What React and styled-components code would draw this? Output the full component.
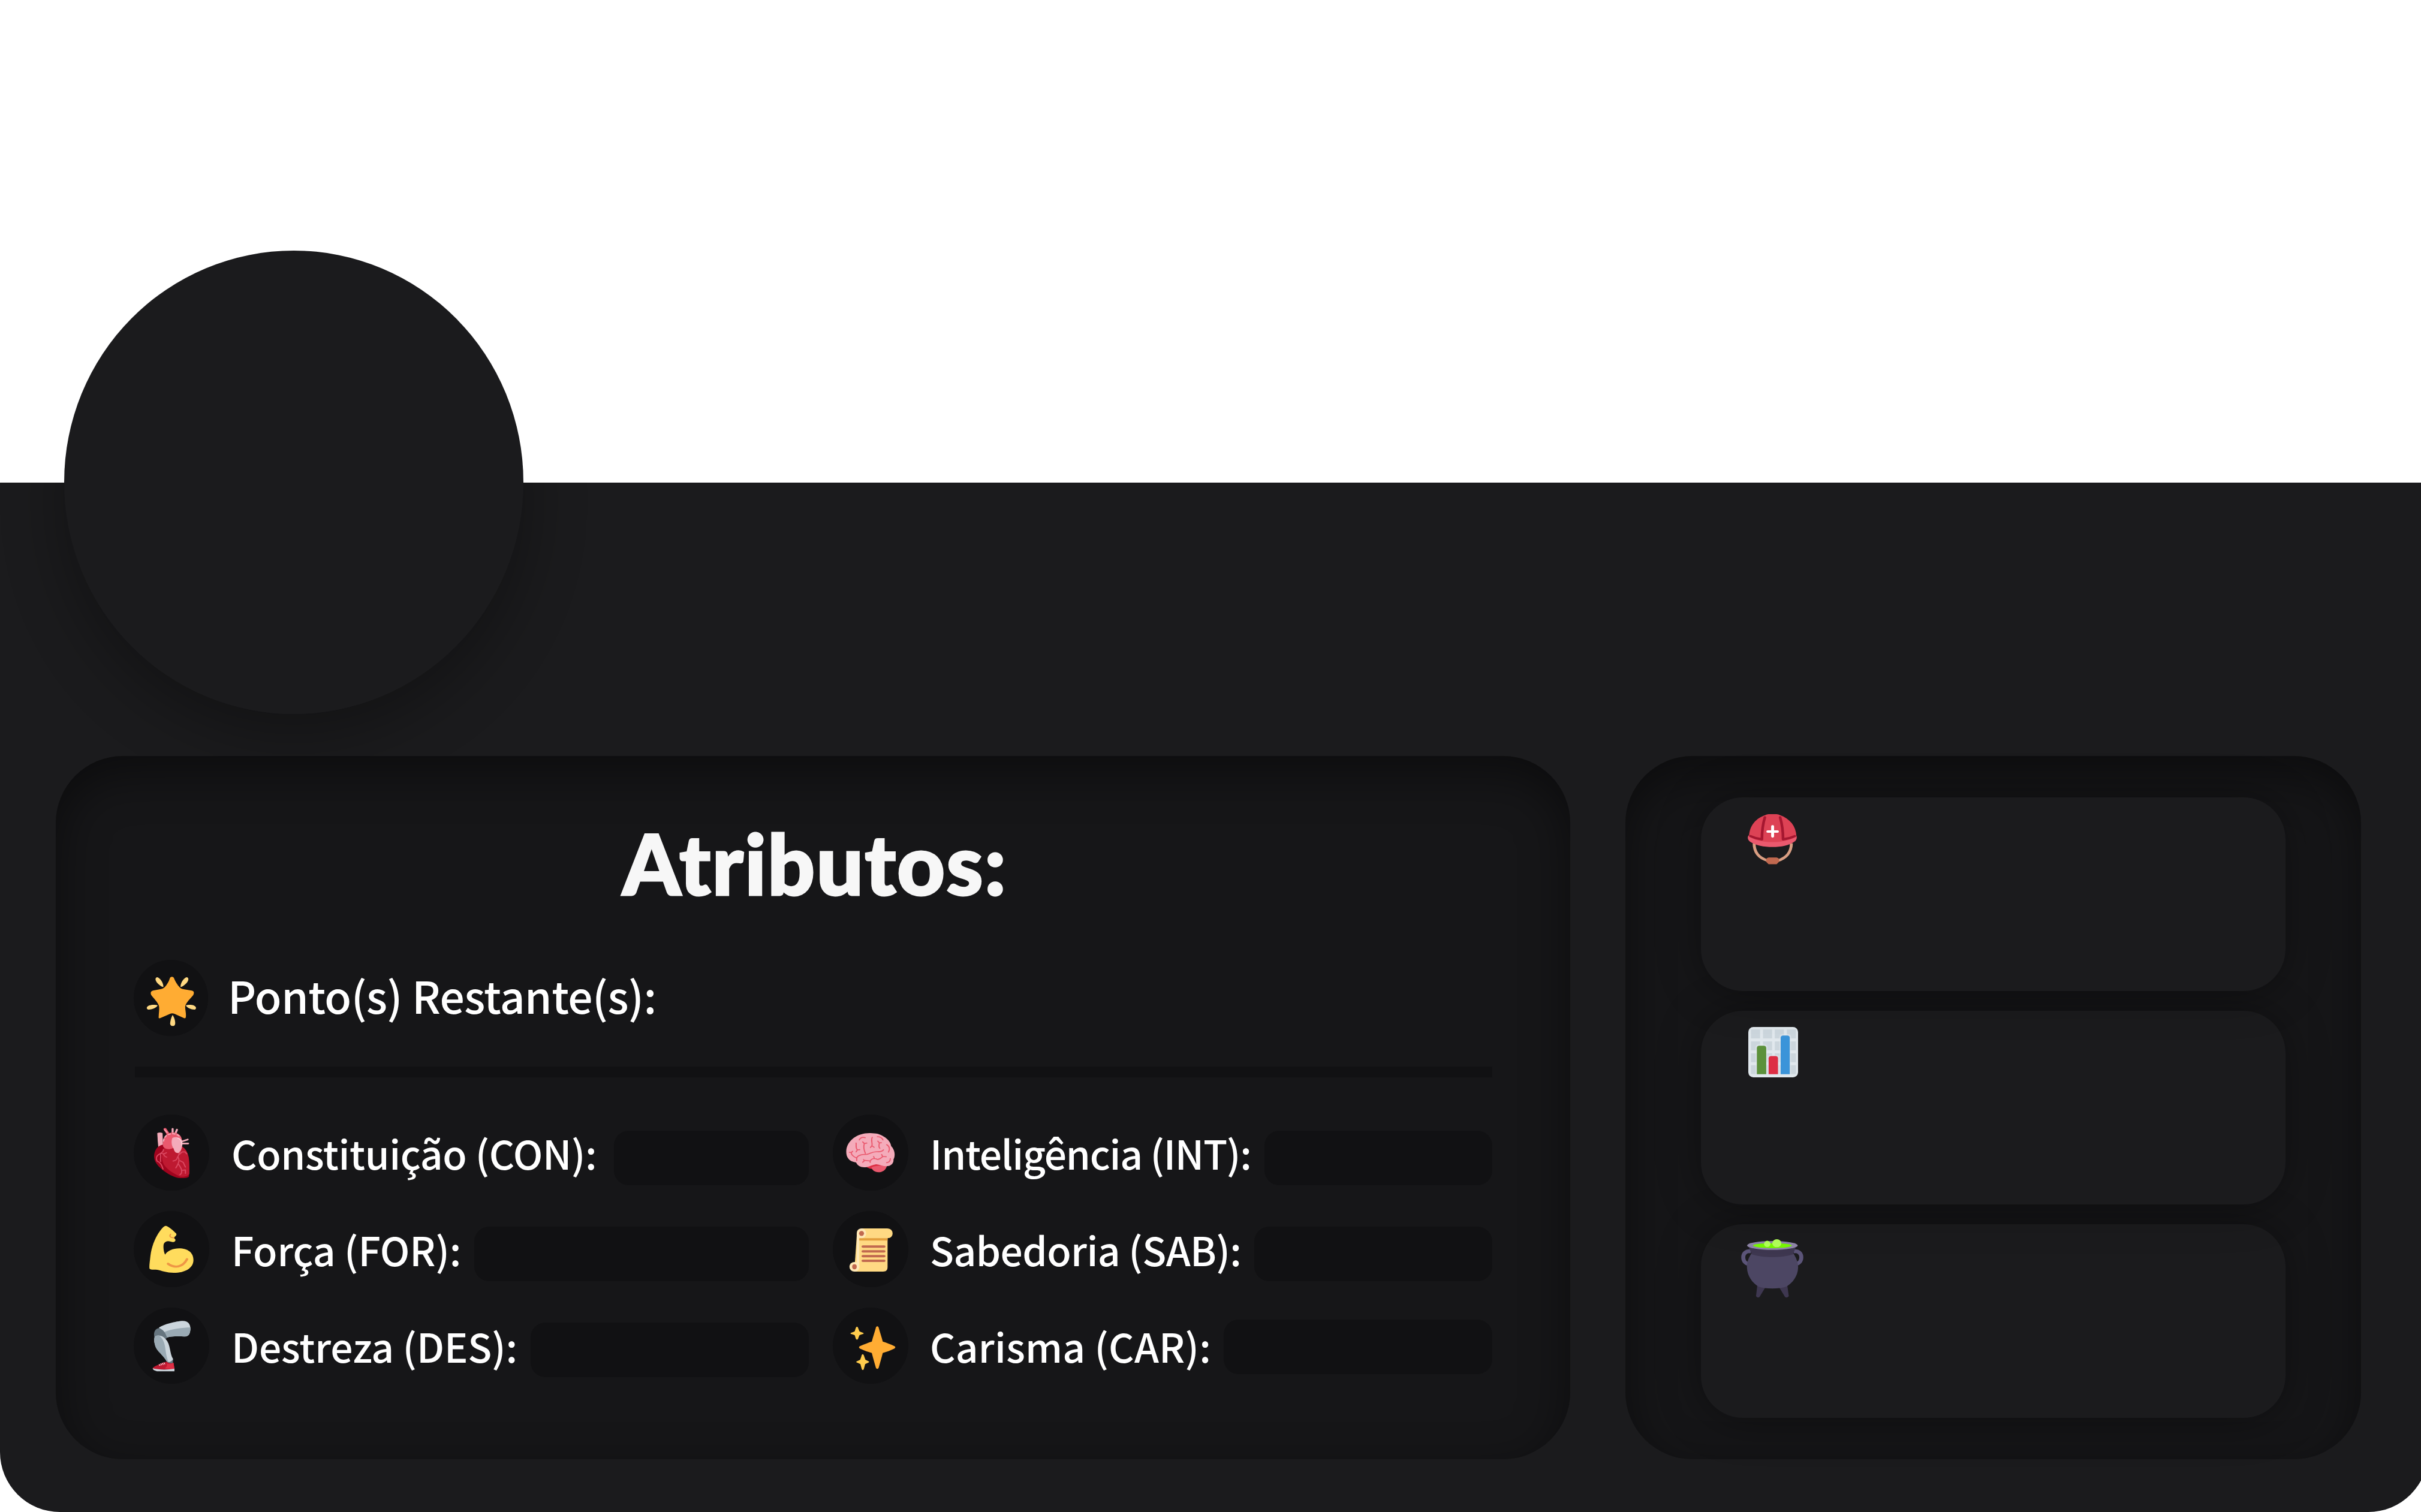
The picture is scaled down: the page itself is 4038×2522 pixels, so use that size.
import React from "react";
import styled, { createGlobalStyle } from "styled-components";

const GlobalStyle = createGlobalStyle`
  * { box-sizing: border-box; }
  body {
    margin: 0;
    background: #ffffff;
    font-family: "Noto Sans CJK JP", "Noto Sans", sans-serif;
    overflow: hidden;
  }
`;

/* ---------- page ---------- */

const Page = styled.main`
  position: relative;
  display: flex;
  flex-direction: column;
  width: 4038px;
  height: 2522px;
  overflow: hidden;
`;

const Banner = styled.header`
  flex: 0 0 805px;
  background: #ffffff;
`;

const Sheet = styled.section`
  position: relative;
  display: flex;
  align-items: flex-start;
  gap: 92px;
  width: 4050px;
  height: 1717px;
  padding: 456px 0 0 93px;
  overflow: hidden;
  background: #1b1b1d;
  border-radius: 0 0 100px 100px;
`;

const AvatarShadow = styled.div`
  position: absolute;
  top: -387px;
  left: 107px;
  width: 766px;
  height: 773px;
  border-radius: 50%;
  box-shadow: 0 32px 105px rgba(0, 0, 0, 0.32);
`;

const Avatar = styled.div`
  position: absolute;
  top: 418px;
  left: 107px;
  width: 766px;
  height: 773px;
  border-radius: 50%;
  background: #1b1b1d;
`;

const Panel = styled.section`
  position: relative;
  display: flex;
  flex-direction: column;
  width: ${(p) => p.$width}px;
  height: 1173px;
  padding: ${(p) => p.$padding};
  border-radius: 112px;
  background: #161618;
  box-shadow: inset 0 26px 80px rgba(0, 0, 0, 0.45);
`;

/* ---------- attributes ---------- */

const Title = styled.h1`
  margin: 0 0 85px;
  padding-left: 6px;
  font-family: Lato, "Noto Sans", sans-serif;
  font-size: 139px;
  font-weight: 900;
  line-height: 153px;
  letter-spacing: 2px;
  text-align: center;
  color: #f7f7f7;
  -webkit-text-stroke: 3px #f7f7f7;
`;

const PointsRow = styled.div`
  display: flex;
  align-items: flex-start;
  gap: 33px;
  height: 127px;
`;

const PointsLabel = styled.span`
  font-size: 73px;
  font-weight: 500;
  line-height: 116px;
  letter-spacing: -0.55px;
  white-space: nowrap;
  color: #ffffff;
`;

const Divider = styled.hr`
  width: calc(100% - 2px);
  height: 18px;
  margin: 51px 0 62px 2px;
  border: 0;
  background: #111113;
`;

const Columns = styled.div`
  display: grid;
  grid-template-columns: 1126px 1100px;
  column-gap: 40px;
`;

const Column = styled.div`
  display: flex;
  flex-direction: column;
  gap: 34px;
`;

const Attribute = styled.div`
  display: flex;
  align-items: flex-start;
  height: 127px;
`;

const IconDisc = styled.span`
  flex: 0 0 ${(p) => p.$width || 126}px;
  height: 127px;
  border-radius: 50%;
  background: #111113;

  svg {
    display: block;
    width: 100%;
    height: 100%;
  }
`;

const AttributeLabel = styled.span`
  flex: 0 0 ${(p) => p.$width}px;
  margin-left: ${(p) => p.$indent}px;
  font-size: 65.9px;
  font-weight: 500;
  line-height: 128px;
  letter-spacing: ${(p) => p.$tracking}px;
  white-space: nowrap;
  color: #ffffff;
`;

const AttributeValue = styled.span`
  flex: 1;
  height: 91px;
  margin-top: ${(p) => p.$top}px;
  border-radius: 25px;
  background: #111113;
`;

/* ---------- side cards ---------- */

const SideCard = styled.article`
  flex: 0 0 323px;
  width: 975px;
  margin-bottom: 33px;
  padding: ${(p) => p.$padding};
  border-radius: 70px;
  background: #1b1b1d;
  box-shadow: 0 4px 70px rgba(0, 0, 0, 0.36);
  z-index: ${(p) => p.$level};
`;

const CardIcon = styled.svg`
  display: block;
  width: ${(p) => p.$w}px;
  height: ${(p) => p.$h}px;
`;

/* ---------- icons ---------- */

const GlowingStar = () => (
  <svg viewBox="38 62 208 381" preserveAspectRatio="none">
    <g fill="#ffd983">
      <path d="M104 149C112 152 122 180 121 198C114 196 100 176 99 160C99 153 101 149 104 149Z" />
      <path d="M186 149C178 152 168 180 169 198C176 196 190 176 191 160C191 153 189 149 186 149Z" />
      <path d="M75 300C77 286 98 284 105 290C102 302 88 312 79 311C75 309 74 305 75 300Z" />
      <path d="M212 300C210 286 192 284 184 290C187 302 200 312 209 311C212 309 213 305 212 300Z" />
      <path d="M147 338C151 348 155 370 154 382C153 392 150 393 147 393C143 393 141 390 140 382C140 370 143 348 147 338Z" />
    </g>
    <path
      fill="#ffac33"
      d="M145 147C148 147 150 150 151 155C155 172 160 188 167 200C170 206 174 208 180 210L200 216C207 219 208 226 204 240C196 258 184 276 182 296C182 314 185 330 184 345C184 356 181 356 177 352L153 333C148 329 143 329 139 333L114 352C109 357 107 354 108 345C108 330 110 314 109 296C107 276 94 256 87 238C84 226 86 219 92 216L110 210C116 208 120 206 124 200C131 188 136 172 139 155C140 150 142 147 145 147Z"
    />
  </svg>
);

const AnatomicalHeart = () => (
  <svg viewBox="60 57 330 381" preserveAspectRatio="none">
    <g stroke="#f4abba" strokeLinecap="round" fill="none">
      <path d="M197 131L208 150" stroke="#ea596e" strokeWidth="13" />
      <path d="M230 129V150M249 133L242 152" strokeWidth="9" />
      <path d="M195 133L206 147" strokeWidth="5" />
    </g>
    <path fill="#f4abba" d="M163 150Q175 144 186 150L188 212L168 226L165 190Z" />
    <path fill="#a0041e" d="M188 208C165 212 150 236 149 265C149 290 162 312 184 332C208 354 238 374 264 375C285 376 299 374 301 367C304 340 303 300 301 276C297 245 284 222 262 212Z" />
    <path fill="#be1931" d="M192 226C182 248 180 284 192 308C210 338 242 356 264 368C280 370 302 365 303 352C303 322 303 292 300 272C296 244 284 222 262 212Z" />
    <path fill="#ea596e" d="M188 214C184 172 202 147 230 147C256 147 272 166 271 192L233 224C212 236 192 230 188 214Z" />
    <path d="M190 192C192 166 208 153 230 153C246 154 258 162 264 172" fill="none" stroke="#f4abba" strokeWidth="6" strokeDasharray="15 5" />
    <g stroke="#f4abba" strokeLinecap="round" fill="none" strokeWidth="8">
      <path d="M264 194L296 182M268 202H298" />
    </g>
    <path fill="#f4abba" d="M229 174C246 166 264 172 272 188C276 210 268 240 258 249C246 253 237 244 235 229C225 214 223 190 229 174Z" />
    <path d="M252 176C262 178 270 188 270 208" fill="none" stroke="#ffd5dc" strokeWidth="4" strokeLinecap="round" />
    <g stroke="#dc4a63" strokeWidth="5" strokeLinecap="round" strokeLinejoin="round" fill="none">
      <path d="M190 232C192 244 178 250 168 258C158 266 158 280 162 290C178 296 184 312 188 330" />
      <path d="M178 252L192 254L203 248M190 254C192 262 196 268 204 270M176 255C182 268 174 276 178 292" />
      <path d="M262 244C256 254 258 264 250 274C250 284 240 288 232 290M252 268C262 280 258 300 244 324" />
      <path d="M260 256L272 244L284 244L292 254M262 288L276 296L286 320M256 306C264 320 274 334 268 352L262 358M274 336L286 334V352" />
    </g>
  </svg>
);

const FlexedArm = () => (
  <svg viewBox="60 540 330 381" preserveAspectRatio="none">
    <path
      fill="#ffdc5d"
      d="M203 615C215 620 235 640 245 652C249 658 246 662 240 668L234 674C240 678 244 682 242 688C240 696 232 697 222 693C208 688 196 692 191 706C188 725 192 745 197 758C208 738 232 727 258 727C296 727 321 748 321 785C321 825 285 849 235 849C205 849 180 838 163 834C150 832 135 836 129 828C127 815 131 790 133 765C140 700 165 650 188 622C194 615 198 613 203 615Z"
    />
    <path d="M210 804C240 828 274 822 293 781" fill="none" stroke="#ef9645" strokeWidth="11" strokeLinecap="round" />
    <path d="M221 656C213 668 222 673 236 674" fill="none" stroke="#ef9645" strokeWidth="5" strokeLinecap="round" />
  </svg>
);

const MechanicalLeg = () => (
  <svg viewBox="60 1022 330 381" preserveAspectRatio="none">
    <path fill="#ccd6dd" d="M170 1123C190 1106 245 1090 275 1089C298 1090 308 1105 308 1130C306 1150 303 1165 285 1167C262 1166 225 1164 208 1171L186 1150Z" />
    <path fill="#9aaab4" d="M192 1145C230 1128 275 1122 308 1122C308 1152 300 1166 283 1167C258 1165 225 1165 204 1172Z" />
    <path fill="#66757f" d="M170 1125C188 1130 200 1150 206 1174L196 1180C185 1164 165 1160 151 1172C146 1150 150 1130 170 1125Z" />
    <path fill="#ccd6dd" d="M152 1168C165 1156 186 1162 200 1180C222 1206 216 1250 232 1279L228 1300L208 1298C195 1268 160 1235 152 1205C148 1188 149 1176 152 1168Z" />
    <path fill="#9aaab4" d="M152 1168C158 1160 168 1160 175 1165C206 1200 192 1240 213 1297L206 1294C185 1252 156 1240 152 1205C149 1188 149 1176 152 1168Z" />
    <path fill="#66757f" d="M204 1291Q218 1302 232 1281L231 1300Q215 1308 205 1300Z" />
    <path fill="#be1931" d="M184 1299L205 1293C212 1302 225 1303 234 1297L238 1330L170 1334L143 1328C143 1318 165 1311 184 1299Z" />
    <path fill="#dd2e44" d="M204 1302C214 1308 226 1304 234 1299L238 1328C222 1330 206 1330 196 1326C204 1320 208 1312 204 1302Z" />
    <path fill="#ccd6dd" d="M143 1326C170 1334 206 1334 238 1328V1341H162C150 1338 143 1333 143 1326Z" />
    <path d="M171 1307L175 1312M178 1303L182 1309M185 1300L189 1307M192 1298L196 1305" stroke="#ffffff" strokeWidth="3" strokeLinecap="round" />
  </svg>
);

const Brain = () => (
  <svg viewBox="50 57 331 381" preserveAspectRatio="none">
    <path fill="#dd2e44" d="M194 318C210 304 250 300 286 312L240 332L212 328Z" />
    <path fill="#ea596e" d="M219 322C240 310 265 312 287 315C282 335 268 346 250 346C232 345 224 336 219 322Z" />
    <path
      fill="#f4abba"
      d="M215 150C160 148 112 185 109 240C108 270 120 292 152 297C160 315 175 324 198 320C212 318 224 308 240 306C256 308 270 316 285 316C305 316 318 300 316 282C326 262 321 232 306 215C303 195 290 178 274 168C258 154 240 151 215 150Z"
    />
    <g fill="none" stroke="#ea596e" strokeWidth="5" strokeLinecap="round" strokeLinejoin="round">
      <path d="M166 184C172 170 182 170 192 173" />
      <path d="M223 171C216 185 224 198 222 212L215 222M222 214L231 221" />
      <path d="M245 168C258 168 266 174 270 184" />
      <path d="M152 200C154 215 148 222 158 234L152 244M158 234L168 233" />
      <path d="M181 194L188 202L199 200M188 204C182 222 188 238 193 252" />
      <path d="M247 190L254 199L263 198M254 201C252 212 250 218 256 226" />
      <path d="M286 208C298 215 302 230 294 245" />
      <path d="M123 246L131 247L137 241M131 249C132 262 145 270 155 275C158 262 175 256 200 256C215 252 225 242 245 243C260 244 268 240 272 234M155 276V288" />
      <path d="M181 296L190 287C200 286 206 290 214 289C222 276 230 276 240 279C252 288 262 272 270 267L284 268M188 288L185 282M214 290V297M232 276L229 267M268 266L264 257" />
      <path d="M286 298C296 296 302 288 302 278" />
    </g>
  </svg>
);

const Scroll = () => (
  <svg viewBox="50 540 331 381" preserveAspectRatio="none">
    <path fill="#ffd983" d="M156 650H290V820C290 836 284 843 270 843H144Z" />
    <path fill="#ffe8b6" d="M155 652H166V819C166 834 158 843 145 843V796L155 798Z" />
    <path fill="#e39f3d" d="M166 674H290V688H166Z" />
    <path fill="#ffd983" d="M176 627H288C304 627 312 638 312 652C312 666 304 676 290 676H176Z" />
    <path fill="#ffe8b6" d="M155 652C155 638 162 627 176 627C188 627 196 638 196 652C196 666 188 676 176 676H166L155 690Z" />
    <ellipse cx="176" cy="652" rx="11" ry="12.500" fill="#c1694f" />
    <ellipse cx="145" cy="819" rx="22" ry="24" fill="#ffe8b6" />
    <ellipse cx="145" cy="819" rx="10" ry="12.500" fill="#c1694f" />
    <path d="M182 718H275M182 742H275M182 766H275M182 789H275" stroke="#c1694f" strokeWidth="12" strokeLinecap="round" />
  </svg>
);

const Sparkles = () => (
  <svg viewBox="50 1022 331 381" preserveAspectRatio="none">
    <path
      fill="#ffac33"
      d="M245 1116C249 1116 251 1120 252 1126C258 1150 264 1170 269 1192C285 1198 305 1206 318 1214C326 1218 326 1224 318 1228C303 1236 285 1244 269 1249C264 1272 258 1295 252 1320C250 1332 240 1332 238 1320C232 1295 226 1272 221 1249C205 1244 187 1236 171 1228C163 1224 163 1218 171 1214C187 1206 205 1198 221 1192C226 1170 232 1150 238 1126C239 1120 241 1116 245 1116Z"
    />
    <g fill="#ffcc4d">
      <path d="M156 1118C160 1118 161 1124 163 1130L167 1141L180 1147C187 1149 187 1153 180 1155L167 1160L162 1174C160 1185 152 1185 150 1174L146 1160L133 1155C126 1153 126 1149 133 1147L146 1141L149 1130C151 1124 152 1118 156 1118Z" />
      <path d="M181 1255C185 1255 187 1262 188 1267L193 1283L205 1290C211 1293 211 1296 205 1298L192 1305L187 1326C185 1338 178 1338 176 1326L171 1305L158 1298C151 1296 151 1293 158 1290L170 1283L175 1267C176 1262 177 1255 181 1255Z" />
    </g>
  </svg>
);

const RescueHelmet = () => (
  <CardIcon $w={84} $h={84} viewBox="482 308 188 220" preserveAspectRatio="none">
    <path d="M506 436C506 475 525 500 556 511M645 436C645 475 625 500 595 511" fill="none" stroke="#d99e82" strokeWidth="11" />
    <path fill="#c1694f" d="M551 505Q553 498 560 497H590Q597 498 599 505V516L590 527H560L551 516Z" />
    <path fill="#dd4255" d="M487 405C489 355 515 325 548 312Q553 308 560 308H590Q597 308 602 312C640 328 662 360 664 405L660 425Q575 460 490 425Z" />
    <path fill="#ea596e" d="M485 400C512 440 638 440 663 400C668 412 664 422 655 429C620 459 530 459 492 429C482 421 480 410 485 400Z" />
    <path d="M546 322C539 350 535 385 535 418C520 416 505 411 492 404M603 322C610 350 614 385 614 418C630 416 645 411 658 404" fill="none" stroke="#a51730" strokeWidth="10" strokeLinecap="round" strokeLinejoin="round" />
    <path d="M575 361V405M557 384H593" stroke="#ffffff" strokeWidth="11" strokeLinecap="round" />
  </CardIcon>
);

const BarChart = () => (
  <CardIcon $w={83} $h={84} viewBox="484 1236 186 220" preserveAspectRatio="none">
    <rect x="484" y="1236" width="186" height="220" rx="19" ry="22" fill="#e1e8ed" />
    <g fill="#ccd6dd">
      {[1247, 1299, 1351, 1403].map((y) =>
        [494, 539, 583, 628].map((x) => <rect key={`${x}-${y}`} x={x} y={y} width="34" height="39" />)
      )}
    </g>
    <path d="M511 1446V1326Q511 1312 524 1312H542Q556 1312 556 1326V1364Q560 1357 568 1357H588Q594 1357 600 1364V1280Q602 1267 614 1267H630Q644 1267 644 1280V1446Z" fill="#e1e8ed" opacity="0.55" />
    <path d="M516 1442V1328Q516 1318 526 1318H541Q551 1318 551 1328V1442Z" fill="#5c913b" />
    <path d="M560 1442V1373Q560 1363 570 1363H585Q595 1363 595 1373V1442Z" fill="#dd2e44" />
    <path d="M605 1442V1283Q605 1273 615 1273H629Q639 1273 639 1283V1442Z" fill="#3b94d9" />
  </CardIcon>
);

const Cauldron = () => (
  <CardIcon $w={104} $h={98} viewBox="457 523 234 226" preserveAspectRatio="none">
    <path fill="#3e3750" d="M518 698L548 708L527 744Q520 752 513 742ZM630 698L600 708L621 744Q628 752 636 742Z" />
    <path d="M494 570C476 566 465 578 465 592C465 606 473 616 485 618M654 570C672 566 683 578 683 592C683 606 675 616 663 618" fill="none" stroke="#5b5478" strokeWidth="15" />
    <path fill="#4c4663" d="M497 576C484 595 478 615 479 632C480 665 500 692 522 705C550 715 598 715 627 705C650 692 670 665 671 632C671 615 665 595 652 576Z" />
    <path fill="#3e3750" d="M486 554L497 581C540 595 610 595 652 581L662 554Z" />
    <ellipse cx="574.500" cy="547" rx="95" ry="17" fill="#8f86a8" />
    <ellipse cx="574.500" cy="547" rx="73" ry="8.500" fill="#76f800" />
    <circle cx="555" cy="541" r="12" fill="#b2ff59" />
    <ellipse cx="591" cy="538.500" rx="17" ry="15.500" fill="#b2ff59" />
    <path d="M502 547C520 556 628 556 647 547C640 560 510 560 502 547Z" fill="#76f800" />
  </CardIcon>
);

/* ---------- data ---------- */

const columns = [
  {
    indent: 37,
    items: [
      { label: "Constituição (CON):", icon: AnatomicalHeart, width: 638, tracking: -0.4, top: 27 },
      { label: "Força (FOR):", icon: FlexedArm, width: 405, tracking: -0.15, top: 26 },
      { label: "Destreza (DES):", icon: MechanicalLeg, width: 499, tracking: -0.12, top: 25 },
    ],
  },
  {
    indent: 36,
    items: [
      { label: "Inteligência (INT):", icon: Brain, width: 558, tracking: -1.23, top: 27 },
      { label: "Sabedoria (SAB):", icon: Scroll, width: 541, tracking: -0.6, top: 26 },
      { label: "Carisma (CAR):", icon: Sparkles, width: 490, tracking: 0.2, top: 20 },
    ],
  },
];

export default function App() {
  return (
    <Page>
      <GlobalStyle />
      <Banner />
      <Sheet>
        <AvatarShadow />
        <Panel $width={2526} $padding="102px 130px 0">
          <Title>Atributos:</Title>
          <PointsRow>
            <IconDisc $width={124}>
              <GlowingStar />
            </IconDisc>
            <PointsLabel>Ponto(s) Restante(s):</PointsLabel>
          </PointsRow>
          <Divider />
          <Columns>
            {columns.map(({ indent, items }) => (
              <Column key={indent}>
                {items.map(({ label, icon: Icon, width, tracking, top }) => (
                  <Attribute key={label}>
                    <IconDisc>
                      <Icon />
                    </IconDisc>
                    <AttributeLabel $width={width} $indent={indent} $tracking={tracking}>
                      {label}
                    </AttributeLabel>
                    <AttributeValue $top={top} />
                  </Attribute>
                ))}
              </Column>
            ))}
          </Columns>
        </Panel>
        <Panel $width={1227} $padding="69px 0 0 126px">
          <SideCard $level={3} $padding="28px 0 0 78px">
            <RescueHelmet />
          </SideCard>
          <SideCard $level={2} $padding="27px 0 0 79px">
            <BarChart />
          </SideCard>
          <SideCard $level={1} $padding="25px 0 0 67px">
            <Cauldron />
          </SideCard>
        </Panel>
      </Sheet>
      <Avatar />
    </Page>
  );
}
